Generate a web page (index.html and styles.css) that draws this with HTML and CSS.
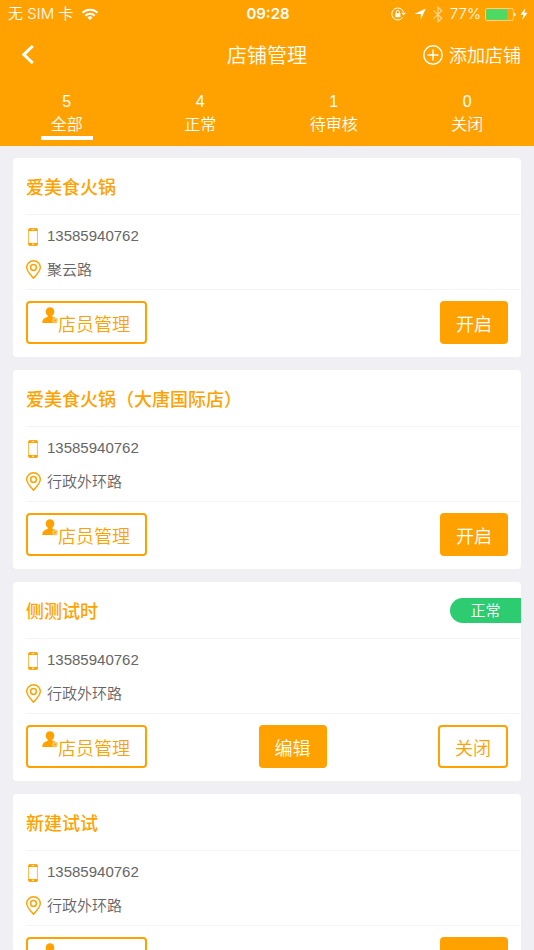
FILE: index.html
```html
<!DOCTYPE html>
<html lang="zh-CN">

<head>
    <meta charset="UTF-8">
    <meta name="viewport" content="width=device-width, initial-scale=1.0">
    <title>店铺管理</title>
    <link rel="stylesheet" href="styles.css">
</head>

<body>

    <!-- shared icons -->
    <svg class="sprite" aria-hidden="true">
        <symbol id="icon-phone" viewBox="0 0 10 18">
            <rect x="0.6" y="0.6" width="8.8" height="16.8" rx="1.4" fill="#fff" stroke="#ffb84a" stroke-width="1" />
            <path d="M0.2 3V1.8Q0.2 0.2 1.8 0.2H8.2Q9.8 0.2 9.8 1.8V3ZM0.2 15V16.2Q0.2 17.8 1.8 17.8H8.2Q9.8 17.8 9.8 16.2V15Z" fill="#ffa200" />
            <path d="M3.6 1.6H6.4" stroke="#fff" stroke-width="0.7" />
            <circle cx="5" cy="16.4" r="0.8" fill="#fff" />
        </symbol>
        <symbol id="icon-pin" viewBox="0.5 0.3 15 19">
            <path d="M8 18.6C5.6 15.6 1.2 11.6 1.2 7.8A6.8 6.8 0 0 1 14.8 7.8C14.8 11.6 10.4 15.6 8 18.6Z" fill="none" stroke="#ffa200" stroke-width="1.4" stroke-linejoin="round" />
            <circle cx="8" cy="7.8" r="2.9" fill="none" stroke="#ffa200" stroke-width="1.5" />
        </symbol>
        <symbol id="icon-user" viewBox="0 0 16 17">
            <ellipse cx="8" cy="4.8" rx="4.3" ry="4.6" fill="#ffa200" />
            <path d="M5.8 8H10.2V9.6L13.2 11V16H0.2C0.2 12.6 2 10.8 5.8 9.8Z" fill="#ffa200" />
            <circle cx="13" cy="13.4" r="2.8" fill="#ffc566" />
            <circle cx="13" cy="13.4" r="1" fill="#ffa200" />
        </symbol>
    </svg>

    <div class="page">

        <header class="header">
            <div class="status-bar">
                <div class="status-left">
                    <span>无 SIM 卡</span>
                    <svg width="18" height="13" viewBox="0 0 18 13">
                        <g fill="none" stroke="#fff" stroke-width="2">
                            <path d="M1.4 4.8A10.8 10.8 0 0 1 16.6 4.8" />
                            <path d="M4.3 7.7A6.7 6.7 0 0 1 13.7 7.7" />
                        </g>
                        <path d="M6.4 9.6A3.7 3.7 0 0 1 11.6 9.6L9 12.3Z" fill="#fff" />
                    </svg>
                </div>
                <span class="status-time">09:28</span>
                <div class="status-right">
                    <svg width="15" height="14" viewBox="0 0 15 14">
                        <path d="M12.5 5.2A6 6 0 1 0 11.7 10.4" fill="none" stroke="#fff" stroke-width="1" />
                        <path d="M10.4 5.8H14.8L12.6 8.6Z" fill="#fff" />
                        <rect x="4.2" y="6.2" width="5.2" height="4" fill="#fff" />
                        <path d="M5.2 6.4V5A1.6 1.6 0 0 1 8.4 5V6.4" fill="none" stroke="#fff" stroke-width="1" />
                    </svg>
                    <svg class="icon-arrow" width="12" height="12" viewBox="0 0 12 12">
                        <path d="M11.8 0.4L6.8 11.6V6H0.4Z" fill="#fff" />
                    </svg>
                    <svg class="icon-bluetooth" width="10" height="17" viewBox="0 0 10 17">
                        <path d="M0.8 4.6L8.8 12.2L5 15.8V1.2L8.8 4.8L0.8 12.4" fill="none" stroke="#ffd58c" stroke-width="1.3" />
                    </svg>
                    <span>77%</span>
                    <svg width="31" height="13" viewBox="0 0 31 13">
                        <rect x="0.6" y="0.6" width="27.8" height="11.8" rx="1.4" fill="none" stroke="#ffd58c" stroke-width="1" />
                        <rect x="1.2" y="1.2" width="21" height="10.6" fill="#4cd964" />
                        <path d="M29.2 4.4Q30.6 4.8 30.6 6.5T29.2 8.6Z" fill="#fff" />
                    </svg>
                    <svg class="icon-bolt" width="8" height="12" viewBox="0 0 8 12">
                        <path d="M5.4 0L0.4 6.8H3.4L2.2 12L7.6 4.8H4.4Z" fill="#fff" />
                    </svg>
                </div>
            </div>

            <div class="nav-bar">
                <button type="button" class="back" aria-label="返回">
                    <svg width="14" height="20" viewBox="0 0 14 20">
                        <path d="M11.8 1L2.8 9.6L11.8 18.2" fill="none" stroke="#fff" stroke-width="3" />
                    </svg>
                </button>
                <h1 class="nav-title">店铺管理</h1>
                <button type="button" class="add">
                    <svg width="20" height="20" viewBox="0 0 20 20">
                        <circle cx="10" cy="10" r="9.2" fill="none" stroke="#fff" stroke-width="1.4" />
                        <path d="M10 4.6V15.4M4.6 10H15.4" stroke="#fff" stroke-width="1.4" />
                    </svg>
                    <span>添加店铺</span>
                </button>
            </div>

            <nav class="tabs">
                <a href="#all" class="tab active"><span>5</span><span class="tab-name">全部</span></a>
                <a href="#normal" class="tab"><span>4</span><span class="tab-name">正常</span></a>
                <a href="#pending" class="tab"><span>1</span><span class="tab-name">待审核</span></a>
                <a href="#closed" class="tab"><span>0</span><span class="tab-name">关闭</span></a>
            </nav>
        </header>

        <main class="shop-list">

            <section class="card">
                <div class="card-head">
                    <h2>爱美食火锅</h2>
                </div>
                <div class="card-info">
                    <div class="row"><svg class="icon-phone"><use href="#icon-phone" /></svg><span>13585940762</span></div>
                    <div class="row"><svg class="icon-pin"><use href="#icon-pin" /></svg><span>聚云路</span></div>
                </div>
                <div class="card-actions">
                    <button type="button" class="btn staff"><svg class="icon-user"><use href="#icon-user" /></svg>店员管理</button>
                    <button type="button" class="btn solid">开启</button>
                </div>
            </section>

            <section class="card">
                <div class="card-head">
                    <h2>爱美食火锅（大唐国际店）</h2>
                </div>
                <div class="card-info">
                    <div class="row"><svg class="icon-phone"><use href="#icon-phone" /></svg><span>13585940762</span></div>
                    <div class="row"><svg class="icon-pin"><use href="#icon-pin" /></svg><span>行政外环路</span></div>
                </div>
                <div class="card-actions">
                    <button type="button" class="btn staff"><svg class="icon-user"><use href="#icon-user" /></svg>店员管理</button>
                    <button type="button" class="btn solid">开启</button>
                </div>
            </section>

            <section class="card">
                <div class="card-head">
                    <h2>侧测试时</h2>
                    <span class="badge">正常</span>
                </div>
                <div class="card-info">
                    <div class="row"><svg class="icon-phone"><use href="#icon-phone" /></svg><span>13585940762</span></div>
                    <div class="row"><svg class="icon-pin"><use href="#icon-pin" /></svg><span>行政外环路</span></div>
                </div>
                <div class="card-actions">
                    <button type="button" class="btn staff"><svg class="icon-user"><use href="#icon-user" /></svg>店员管理</button>
                    <button type="button" class="btn solid">编辑</button>
                    <button type="button" class="btn">关闭</button>
                </div>
            </section>

            <section class="card">
                <div class="card-head">
                    <h2>新建试试</h2>
                </div>
                <div class="card-info">
                    <div class="row"><svg class="icon-phone"><use href="#icon-phone" /></svg><span>13585940762</span></div>
                    <div class="row"><svg class="icon-pin"><use href="#icon-pin" /></svg><span>行政外环路</span></div>
                </div>
                <div class="card-actions">
                    <button type="button" class="btn staff"><svg class="icon-user"><use href="#icon-user" /></svg>店员管理</button>
                    <button type="button" class="btn solid">开启</button>
                </div>
            </section>

        </main>
    </div>

</body>

</html>
```
FILE: styles.css
```css
* {
    box-sizing: border-box;
}

body {
    margin: 0;
    background: #efeff4;
    color: #666666;
    font-family: "Liberation Sans", "Noto Sans CJK SC", sans-serif;
    font-size: 16px;
    font-weight: 350;
}

h1,
h2 {
    margin: 0;
}

button {
    padding: 0;
    border: none;
    background: none;
    color: inherit;
    font: inherit;
    cursor: pointer;
}

svg {
    display: block;
    flex: none;
}

.sprite {
    display: none;
}

.page {
    display: flex;
    flex-direction: column;
    height: 100vh;
}

/* header */
.header {
    flex: none;
    background: #ffa200;
    color: #ffffff;
}

.status-bar {
    display: grid;
    grid-template-columns: 1fr auto 1fr;
    align-items: center;
    height: 28px;
    padding: 0 6px 0 8px;
    font-family: Inter, "Noto Sans CJK SC", sans-serif;
    font-size: 15px;
    line-height: 28px;
}

.status-left,
.status-right {
    display: flex;
    align-items: center;
    gap: 8px;
}

.status-right {
    justify-content: flex-end;
    gap: 4px;
}

.status-time {
    font-weight: 600;
}

.icon-arrow {
    margin: 0 3px 0 4px;
}

.icon-bluetooth {
    margin-right: 3px;
}

.nav-bar {
    display: grid;
    grid-template-columns: 1fr auto 1fr;
    align-items: center;
    height: 54px;
    padding: 0 13px;
}

.back {
    justify-self: start;
    padding: 5px 8px;
}

.nav-title {
    padding-bottom: 2px;
    font-size: 20px;
    font-weight: 350;
}

.add {
    display: flex;
    align-items: center;
    justify-self: end;
    gap: 6px;
    font-size: 18px;
}

.add span {
    padding-bottom: 2px;
}

.tabs {
    display: grid;
    grid-template-columns: repeat(4, 1fr);
    height: 64px;
    padding-top: 8px;
}

.tab {
    display: flex;
    flex-direction: column;
    align-items: center;
    color: #ffffff;
    line-height: 23px;
    text-decoration: none;
}

.tab-name {
    min-width: 52px;
    height: 27px;
    border-bottom: 4px solid transparent;
    text-align: center;
}

.active .tab-name {
    border-color: #ffffff;
}

/* shop list */
.shop-list {
    display: flex;
    flex: 1;
    flex-direction: column;
    gap: 13px;
    min-height: 0;
    padding: 12px 13px;
    overflow-y: auto;
    scrollbar-width: none;
}

.card {
    flex: none;
    border-radius: 4px;
    background: #ffffff;
}

.card-head {
    display: flex;
    align-items: center;
    justify-content: space-between;
    height: 57px;
    margin-left: 13px;
    border-bottom: 1px solid #f4f4f6;
}

.card-head h2 {
    color: #ffa200;
    font-size: 18px;
    font-weight: 500;
}

.badge {
    width: 71px;
    height: 25px;
    border-radius: 13px 0 0 13px;
    background: #2ecc71;
    color: #ffffff;
    font-size: 15px;
    line-height: 25px;
    text-align: center;
}

.card-info {
    margin-left: 13px;
    padding: 4px 0;
    border-bottom: 1px solid #f4f4f6;
}

.row {
    display: flex;
    align-items: center;
    gap: 6px;
    height: 33px;
    font-size: 15px;
}

.icon-phone {
    width: 10px;
    height: 18px;
    margin: 2px 3px 0 2px;
}

.icon-pin {
    width: 15px;
    height: 19px;
    margin-top: 1px;
}

.card-actions {
    display: flex;
    justify-content: space-between;
    padding: 11px 13px 13px;
}

.btn {
    display: flex;
    justify-content: center;
    align-items: center;
    height: 43px;
    padding: 0 15px;
    border: 2px solid #ffa200;
    border-radius: 4px;
    color: #ffa200;
    font-size: 18px;
}

.staff {
    padding: 0 15px 0 14px;
}

.solid {
    padding: 0 14px;
    background: #ffa200;
    color: #ffffff;
}

.icon-user {
    width: 16px;
    height: 17px;
    margin-bottom: 15px;
}
```
